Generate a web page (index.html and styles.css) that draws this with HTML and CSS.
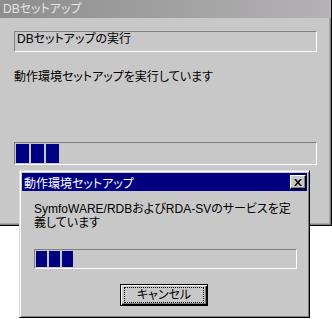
FILE: index.html
```html
<!DOCTYPE html>
<html lang="ja">
<head>
  <meta charset="UTF-8">
  <title>DBセットアップ</title>
  <link rel="stylesheet" href="styles.css">
</head>
<body>
  <!-- Background setup window -->
  <div class="win">
    <div class="win-title">DBセットアップ</div>
    <div class="win-body">
      <div class="textbox">DBセットアップの実行</div>
      <p class="label">動作環境セットアップを実行しています</p>
      <div class="progress big">
        <span class="block"></span>
        <span class="block"></span>
        <span class="block"></span>
      </div>
    </div>
  </div>

  <!-- Dialog on top -->
  <div class="dialog">
    <div class="dlg-title">
      <span>動作環境セットアップ</span>
      <button class="close-btn" aria-label="閉じる">
        <svg width="8" height="7" viewBox="0 0 8 7">
          <path d="M0 0h2l2 2.5 2-2.5h2l-3 3.5 3 3.5h-2l-2-2.5-2 2.5h-2l3-3.5z" fill="#000"/>
        </svg>
      </button>
    </div>
    <div class="dlg-body">
      <p class="message">SymfoWARE/RDBおよびRDA-SVのサービスを定</p>
      <p class="message">義しています</p>
      <div class="progress small">
        <span class="block"></span>
        <span class="block"></span>
        <span class="block"></span>
      </div>
      <button class="cancel-btn"><span class="focus">キャンセル</span></button>
    </div>
  </div>
</body>
</html>
```

FILE: styles.css
```css
body {
  margin: 0;
  width: 332px;
  height: 319px;
  overflow: hidden;
  position: relative;
  background: #fff;
  font-family: "Liberation Sans", "Noto Sans CJK JP", sans-serif;
  font-size: 12px;
  font-feature-settings: "palt" 1;
  color: #000;
}

/* background window */
.win {
  box-sizing: border-box;
  width: 332px;
  height: 226px;
  background: #c8c8c8;
  border-right: 1px solid #000;
  border-bottom: 1px solid #000;
  box-shadow: inset -1px -1px #808080, inset -2px -2px #a8a8a8;
}
.win-title {
  height: 18px;
  line-height: 18px;
  padding-left: 3px;
  color: #e4e4e4;
  background: linear-gradient(to right, #8e8e8e, #b4b2b4);
}
.win-body {
  padding: 13px 14px 0 14px;
}
.textbox {
  box-sizing: border-box;
  height: 21px;
  line-height: 14px;
  padding: 0 2px;
  border-top: 1px solid #808080;
  border-left: 1px solid #808080;
  border-bottom: 1px solid #fff;
  border-right: 1px solid #fff;
  white-space: nowrap;
}
.label {
  margin: 18px 0 0;
  line-height: 14px;
  white-space: nowrap;
}

/* progress bars */
.progress {
  box-sizing: border-box;
  display: flex;
  gap: 2px;
  padding: 1px;
  border-top: 1px solid #808080;
  border-left: 1px solid #808080;
  border-bottom: 1px solid #fff;
  border-right: 1px solid #fff;
}
.progress .block {
  background: #000080;
}
.progress.big {
  margin-top: 58px;
  height: 23px;
}
.progress.big .block {
  width: 13px;
}
.progress.small {
  margin-top: 19px;
  width: 263px;
  height: 20px;
}
.progress.small .block {
  width: 11px;
}

/* dialog window */
.dialog {
  position: absolute;
  left: 19px;
  top: 170px;
  box-sizing: border-box;
  width: 291px;
  height: 148px;
  padding: 2px;
  background: #c8c8c8;
  border-top: 1px solid #dfdfdf;
  border-left: 1px solid #dfdfdf;
  border-bottom: 1px solid #000;
  border-right: 1px solid #000;
  box-shadow: inset 1px 1px #fff, inset -1px -1px #808080;
}
.dlg-title {
  height: 18px;
  display: flex;
  align-items: center;
  justify-content: space-between;
  padding: 0 1px 0 2px;
  background: #000080;
  color: #fff;
  white-space: nowrap;
}
.close-btn {
  box-sizing: border-box;
  width: 16px;
  height: 14px;
  padding: 0;
  display: flex;
  align-items: center;
  justify-content: center;
  background: #c8c8c8;
  border-top: 1px solid #fff;
  border-left: 1px solid #fff;
  border-bottom: 1px solid #000;
  border-right: 1px solid #000;
  box-shadow: inset -1px -1px #808080;
}
.dlg-body {
  padding: 11px 0 0 12px;
}
.message {
  margin: 0;
  height: 14px;
  line-height: 14px;
  white-space: nowrap;
}
.cancel-btn {
  display: block;
  box-sizing: border-box;
  width: 88px;
  height: 22px;
  margin: 15px 0 0 86px;
  padding: 0;
  font: inherit;
  background: #c8c8c8;
  border: 1px solid #000;
  box-shadow: inset 1px 1px #fff, inset -1px -1px #000, inset -2px -2px #808080;
}
.cancel-btn .focus {
  display: block;
  margin: 0 3px;
  height: 14px;
  line-height: 14px;
  border: 1px dotted #000;
}
```
